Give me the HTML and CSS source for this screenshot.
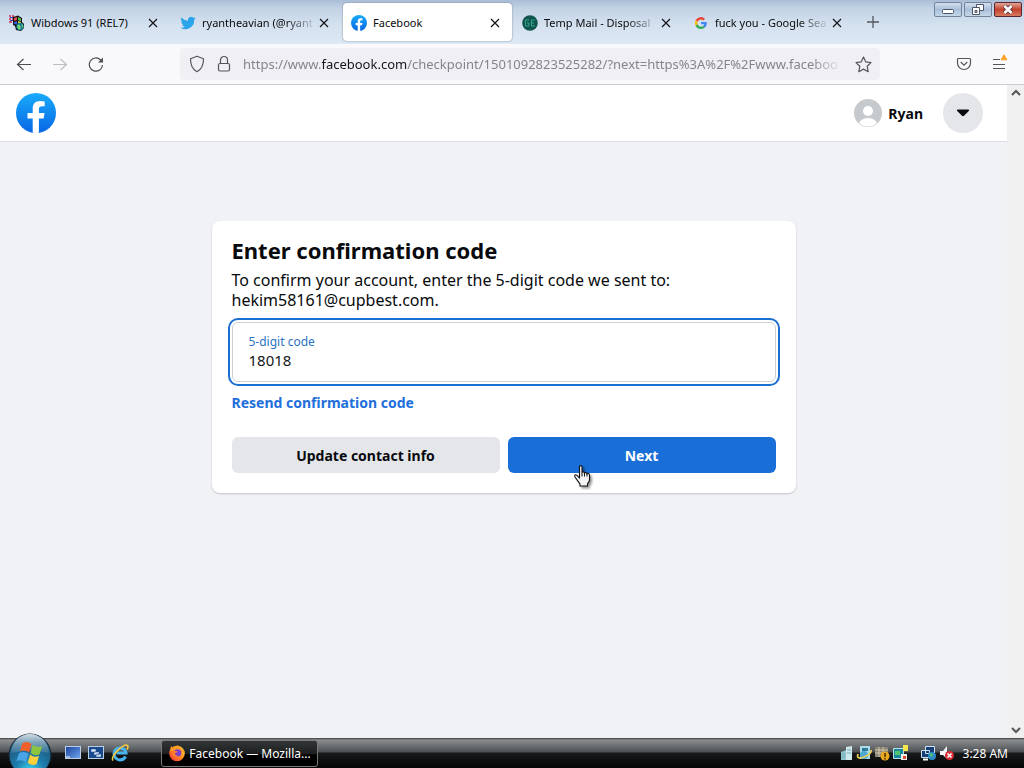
FILE: index.html
```html
<!DOCTYPE html>
<html lang="en">
<head>
<meta charset="utf-8">
<title>Facebook</title>
<link rel="stylesheet" href="styles.css">
</head>
<body>
<svg class="defs" width="0" height="0" aria-hidden="true">
  <defs>
    <linearGradient id="fbBlue" x1="0" y1="0" x2="0" y2="1"><stop offset="0" stop-color="#19abfb"/><stop offset="1" stop-color="#0866e4"/></linearGradient>
    <radialGradient id="orb" cx="50%" cy="90%" r="85%"><stop offset="0" stop-color="#3fdcf5"/><stop offset=".4" stop-color="#1f7fae"/><stop offset="1" stop-color="#1a4a6c"/></radialGradient>
    <linearGradient id="gloss" x1="0" y1="0" x2="0" y2="1"><stop offset="0" stop-color="#e6f0f5" stop-opacity=".9"/><stop offset="1" stop-color="#9fc0d2" stop-opacity=".2"/></linearGradient>
    <linearGradient id="fox" x1="1" y1="0" x2="0" y2="1"><stop offset="0" stop-color="#ffe14a"/><stop offset=".5" stop-color="#ff8a1f"/><stop offset="1" stop-color="#f0283c"/></linearGradient>
    <linearGradient id="screen" x1="0" y1="0" x2="1" y2="1"><stop offset="0" stop-color="#1b3fa0"/><stop offset="1" stop-color="#6fa8ec"/></linearGradient>
    <symbol id="x" viewBox="0 0 10 10"><path d="M1 1l8 8M9 1L1 9" stroke="#15141a" stroke-width="1.2" fill="none"/></symbol>
    <symbol id="fb" viewBox="0 0 40 40"><circle cx="20" cy="20" r="20" fill="url(#fbBlue)"/><path d="M16.700 39.800V25.600h-5.200V20h5.200v-4.200c0-5.100 2.800-7.800 7.400-7.800 1.600 0 3.300.2 4.600.5v4.700h-2.500c-2.600 0-3.300 1.200-3.300 3V20h5.700l-1 5.600h-4.700v14.200a20 20 0 0 1-6.200 0z" fill="#fff"/></symbol>
  </defs>
</svg>

<header class="tabs">
  <div class="tab">
    <svg class="fav" viewBox="0 0 16 16"><path d="M0 1h2M3 1h2M0 4h2M3 4h2M0 7h3" stroke="#d22a55" stroke-width="1.500"/><path d="M1 2.500h3M1 5.500h3" stroke="#3b3fae"/><path d="M4 2l5-1.500L13 3v4l2 2v4l-3 3-5-1-1-4-2-1z" fill="#111"/><path d="M5 3l3-1v3L5 6z" fill="#e64848"/><path d="M9 2l3 1.500v3L9 5z" fill="#4fc04f"/><path d="M5 7l3-1v3L5 9.500z" fill="#3858dd"/><path d="M9 6l3 1v2L9 8.500z" fill="#e8d23a"/><circle cx="11" cy="11.500" r="3.700" fill="#168091"/><path d="M9 10l2 1v3l-2-1zM13 9.500l1 3" stroke="#8be37b" fill="#4ab86a"/></svg>
    <span class="tab-title">Wibdows 91 (REL7)</span>
    <button class="close" aria-label="Close tab"><svg><use href="#x"/></svg></button>
  </div>
  <div class="tab">
    <svg class="fav" viewBox="0 0 24 24"><path fill="#2aa4ea" d="M23.600 5c-.8.400-1.700.600-2.700.800 1-.6 1.700-1.500 2-2.600-.9.500-1.900.900-3 1.100a4.700 4.700 0 0 0-8 4.300A13.300 13.300 0 0 1 2.200 3.700a4.700 4.700 0 0 0 1.500 6.200c-.8 0-1.500-.2-2.100-.6 0 2.300 1.600 4.200 3.700 4.700-.7.200-1.400.2-2.100.1.600 1.800 2.300 3.200 4.400 3.200A9.400 9.400 0 0 1 .7 19.200 13.300 13.300 0 0 0 21.200 7.400c1-.7 1.800-1.500 2.400-2.400z"/></svg>
    <span class="tab-title fade">ryantheavian (@ryant</span>
    <button class="close" aria-label="Close tab"><svg><use href="#x"/></svg></button>
  </div>
  <div class="tab active">
    <svg class="fav"><use href="#fb"/></svg>
    <span class="tab-title">Facebook</span>
    <button class="close" aria-label="Close tab"><svg><use href="#x"/></svg></button>
  </div>
  <div class="tab">
    <svg class="fav" viewBox="0 0 16 16"><circle cx="8" cy="8" r="7.800" fill="#11564d"/><path d="M7 5H3.500v6H7V8H5M13 5H9.500v6H13M9.500 8H12" stroke="#35a58c" fill="none"/></svg>
    <span class="tab-title fade">Temp Mail - Disposal</span>
    <button class="close" aria-label="Close tab"><svg><use href="#x"/></svg></button>
  </div>
  <div class="tab">
    <svg class="fav small" viewBox="0 0 48 48"><path fill="#ea4335" d="M24 10c3.500 0 6.700 1.200 9.200 3.600l6.800-6.900A23.900 23.900 0 0 0 2.600 13.200l8 6.200C12.400 13.700 17.700 10 24 10z"/><path fill="#4285f4" d="M47 24.500c0-1.600-.2-3.100-.4-4.500H24v9h12.900a11 11 0 0 1-4.700 7.200l7.700 6c4.500-4.200 7.100-10.400 7.100-17.700z"/><path fill="#fbbc05" d="M10.500 28.600a14.500 14.500 0 0 1 0-9.200l-8-6.200a24 24 0 0 0 0 21.600z"/><path fill="#34a853" d="M24 48c6.500 0 11.900-2.100 15.900-5.800l-7.700-6A14.500 14.500 0 0 1 10.500 28.600l-8 6.200A24 24 0 0 0 24 48z"/></svg>
    <span class="tab-title fade">fuck you - Google Sea</span>
    <button class="close" aria-label="Close tab"><svg><use href="#x"/></svg></button>
  </div>
  <button class="new-tab" aria-label="New tab"><svg width="12" height="12"><path d="M6 0v12M0 6h12" stroke="#55565c" stroke-width="1.300"/></svg></button>
  <div class="win-buttons">
    <button aria-label="Minimize"><svg width="26" height="13"><rect x="7.500" y="6.500" width="11" height="4" rx="1" fill="#fff" stroke="#4b5565"/></svg></button>
    <button aria-label="Restore"><svg width="26" height="13"><path d="M11.500 1.500h7v6h-7z" fill="#fff" stroke="#4b5565"/><path d="M7.500 4.500h7v7h-7z" fill="#fff" stroke="#4b5565"/><path d="M10 7.500h2v2h-2z" fill="#b8c6d6" stroke="#4b5565"/></svg></button>
    <button class="win-close" aria-label="Close"><svg width="26" height="13"><path d="M9.500 3l7 7M16.500 3l-7 7" stroke="#57323a" stroke-width="4.500"/><path d="M9.500 3l7 7M16.500 3l-7 7" stroke="#fff" stroke-width="2.600"/></svg></button>
  </div>
</header>

<nav class="toolbar">
  <div class="nav-buttons">
    <button aria-label="Back"><svg width="16" height="16"><path d="M15 8.500H1.500M7.500 3L1.500 8.500l6 5.500" fill="none" stroke="#4e4d55" stroke-width="1.200"/></svg></button>
    <button aria-label="Forward"><svg width="16" height="16"><path d="M1 8.500h13.500M8.500 3l6 5.500-6 5.500" fill="none" stroke="#bdbdc1" stroke-width="1.200"/></svg></button>
    <button aria-label="Reload"><svg width="16" height="16"><path d="M14.500 9a6.600 6.600 0 1 1-2-5.200l1.500 1.600" fill="none" stroke="#4e4d55" stroke-width="1.200"/><path d="M15 1.500V6.500H10z" fill="#4e4d55"/></svg></button>
  </div>
  <div class="urlbar">
    <svg width="16" height="18" viewBox="0 0 16 18"><path d="M8 1.200l6.500 2.500c0 6-1.500 10.500-6.500 13C3 14.200 1.500 9.700 1.500 3.700z" fill="none" stroke="#56555d" stroke-width="1.200" stroke-linejoin="round"/></svg>
    <svg width="14" height="18" viewBox="0 0 14 18"><rect x="1.500" y="8.500" width="11" height="7.500" rx="1.500" fill="none" stroke="#56555d" stroke-width="1.200"/><path d="M3.500 8.500V5a3.500 3.500 0 0 1 7 0v3.500" fill="none" stroke="#56555d" stroke-width="1.200"/></svg>
    <span class="url">https://www.<b>facebook.com</b>/checkpoint/1501092823525282/?next=https%3A%2F%2Fwww.faceboo</span>
    <button aria-label="Bookmark"><svg width="17" height="17" viewBox="0 0 17 17"><path d="M8.500 1l2.300 4.900 5.200.7-3.800 3.700 1 5.400-4.700-2.600-4.700 2.600 1-5.400L1 6.600l5.200-.7z" fill="none" stroke="#56555d" stroke-width="1.200" stroke-linejoin="round"/></svg></button>
  </div>
  <div class="tools">
    <button aria-label="Save to Pocket"><svg width="16" height="16"><path d="M2.500 2.500h11a1 1 0 0 1 1 1v3.500a6.500 6.500 0 0 1-13 0V3.500a1 1 0 0 1 1-1z" fill="none" stroke="#56555d" stroke-width="1.200"/><path d="M4.700 6L8 9.200 11.300 6" fill="none" stroke="#56555d" stroke-width="1.200"/></svg></button>
    <button aria-label="Menu"><svg width="16" height="20"><path d="M1 5.500h7M1 10.500h12M1 14.500h12" stroke="#56555d" stroke-width="1.200"/><path d="M12 .8l3 5H9z" fill="#fba32b" stroke="#fba32b" stroke-linejoin="round"/></svg></button>
  </div>
</nav>

<div class="viewport">
  <div class="page">
    <header class="site-header">
      <a class="logo" href="#" aria-label="Facebook"><svg width="40" height="40"><use href="#fb"/></svg></a>
      <a class="profile" href="#">
        <svg width="28" height="28" viewBox="0 0 28 28"><clipPath id="av"><circle cx="14" cy="14" r="13.500"/></clipPath><circle cx="14" cy="14" r="14" fill="#c6cacd"/><g clip-path="url(#av)" fill="#fff"><circle cx="14" cy="12" r="5"/><ellipse cx="14" cy="25" rx="9" ry="6"/></g></svg>
        <span>Ryan</span>
      </a>
      <button class="account" aria-label="Account"><svg width="14" height="8"><path d="M1.500.5h11q1 .5.3 1.400L8 6.800q-1 .8-2 0L1.200 1.900Q.5 1 1.500.5z" fill="#080a0d"/></svg></button>
    </header>
    <main class="content">
      <form class="card">
        <h1>Enter confirmation code</h1>
        <p>To confirm your account, enter the 5-digit code we sent to: hekim58161@cupbest.com.</p>
        <div class="field">
          <label for="code">5-digit code</label>
          <input id="code" type="text" value="18018">
        </div>
        <a class="resend" href="#">Resend confirmation code</a>
        <div class="actions">
          <button class="btn" type="button">Update contact info</button>
          <button class="btn primary" type="button">Next
            <svg class="cursor" width="24" height="28" viewBox="0 0 24 28"><path d="M6.500 1.500c0-1 2.500-1 2.500 0v6c.5-1 2.500-.8 2.500.5.500-.8 2.500-.5 2.500.8.800-.7 2.500-.2 2.500 1.200v5.500l-2 3.500v2H7v-2l-5-7c-1-1.800.5-3 2-1.700l2.500 2.500z" fill="#f4f4f4" stroke="#111" stroke-width="1.100"/><path d="M9 7.500v4M11.500 8v3.500M14 9v2.500" stroke="#111"/></svg>
          </button>
        </div>
      </form>
    </main>
  </div>
  <div class="scrollbar" aria-hidden="true">
    <svg width="10" height="8"><path d="M1 6l4-4 4 4" fill="none" stroke="#55585c" stroke-width="2"/></svg>
    <svg width="10" height="8"><path d="M1 2l4 4 4-4" fill="none" stroke="#55585c" stroke-width="2"/></svg>
  </div>
</div>

<footer class="taskbar">
  <button class="start" aria-label="Start"><svg width="44" height="44" viewBox="0 0 44 44"><circle cx="22" cy="22" r="21" fill="url(#orb)" stroke="#172735"/><path d="M3 20a19 19 0 0 1 38 0q-19-5-38 0z" fill="url(#gloss)"/><g transform="rotate(8 22 21)"><path d="M13 11.500q5-3.500 9-.5l-1 8.500q-5-2.500-9.500.5z" fill="#f0602a"/><path d="M23.500 11.500q5 3 9.500 0l-1.500 8.500q-5 3-9 0z" fill="#8cc63f"/><path d="M11 21.500q5-3 9.500-.5l-1.500 8.500q-5-2.500-9.500.5z" fill="#4ba3e8"/><path d="M22.200 21.500q4.500 3 9 0L30 30q-5 3-9 0z" fill="#ffd03b"/></g></svg></button>
  <div class="quick">
    <button aria-label="Show desktop"><svg width="16" height="14"><rect x=".5" y=".5" width="15" height="12" fill="url(#screen)" stroke="#b9cfe6"/><path d="M1 11h4" stroke="#fff"/></svg></button>
    <button aria-label="Switch windows"><svg width="16" height="14"><rect x=".5" y=".5" width="15" height="12" fill="#1b4a8c" stroke="#b9cfe6"/><path d="M3 3h5v3H3zM6 6h5v3H6zM8 8h5v3H8z" fill="#dce9f7" stroke="#1b4a8c" stroke-width=".5"/></svg></button>
    <button aria-label="Internet Explorer"><svg width="18" height="18"><path d="M14.500 12.500A6 6 0 1 1 15 9H5.500" fill="none" stroke="#47b4ee" stroke-width="3"/><path d="M2 16.500C-1 13 13-2 16.500 1.500c.8 1 .4 2.500-.5 4" fill="none" stroke="#f5c93c" stroke-width="1.600"/></svg></button>
  </div>
  <button class="task">
    <svg width="18" height="18"><circle cx="9" cy="9.500" r="7.800" fill="url(#fox)"/><path d="M2 7L3 2l3 3 4-4c1 3 4 3 6 7" fill="#ff9a25"/><circle cx="9.500" cy="9" r="3.800" fill="#7a3fd2"/><path d="M4 7q4-1 6 1l-3 1q0 3 4 3-4 3-7-1z" fill="#ff7a2a"/></svg>
    <span>Facebook — Mozilla...</span>
  </button>
  <div class="tray">
    <svg width="14" height="16"><path d="M1 7l5-2v10H1z" fill="#8fc3cd"/><path d="M6 2l6-1v14H6z" fill="#cfe9ea"/><path d="M7 5h4M7 8h4M2 9h3M2 12h3" stroke="#6da9b6"/></svg>
    <svg width="16" height="16"><path d="M4 1h10v13H4z" fill="#a9dbe8"/><path d="M6 3h6v3H6z" fill="#307898"/><circle cx="8" cy="10" r="4" fill="#4fa6d2"/><path d="M2 9Q0 15 8 12T15 5" fill="none" stroke="#e6cc59" stroke-width="1.800"/></svg>
    <svg width="16" height="16"><path d="M1 2h13v10H1z" fill="#8a8272"/><path d="M1 5h13M1 8h13M5 2v10M9 2v10" stroke="#cec6ad"/><circle cx="11" cy="11" r="4.500" fill="#eba91d"/><path d="M11 8v4M11 13v1.500" stroke="#4b2b00" stroke-width="1.500"/></svg>
    <svg width="17" height="16"><path d="M1.500 3.500h10v10h-10z" fill="#19879d" stroke="#b5e4e4"/><path d="M11 0h5v6h-5z" fill="#f5e64c"/><path d="M3 6h5v4H3z" fill="#52c66a"/><path d="M9 9h6v6H9z" fill="#eef2ee"/><path d="M11 11h3v3h-3z" fill="#de4931"/></svg>
    <svg class="network" width="17" height="16"><path d="M5.500 1.500h9v7h-9zM1.500 5.500h8v7h-8z" fill="#173e77" stroke="#cde5f2"/><path d="M3 14.500h5" stroke="#fff" stroke-width="2"/><circle cx="12" cy="11" r="4" fill="#2b8cc9"/><path d="M10 8l3 1-1 3-2-1z" fill="#55c567"/></svg>
    <svg width="17" height="16"><path d="M1 6h3l4-5v13l-4-4H1z" fill="#f2f4f5"/><circle cx="10.500" cy="10.500" r="4.500" fill="#d92c35"/><path d="M8.500 8.500l4 4m0-4l-4 4" stroke="#fff" stroke-width="1.600"/></svg>
    <time>3:28 AM</time>
  </div>
</footer>
</body>
</html>
```
FILE: styles.css
```css
* { box-sizing: border-box; }
body {
  margin: 0;
  height: 100vh;
  display: flex;
  flex-direction: column;
  overflow: hidden;
  font-family: "Noto Sans", "Open Sans", sans-serif;
  color: #080a0d;
}
button {
  border: 0;
  padding: 0;
  background: none;
  font: inherit;
  color: inherit;
  display: flex;
  align-items: center;
  justify-content: center;
  flex: none;
}
a { text-decoration: none; color: inherit; }
svg { display: block; flex: none; }
.defs { position: absolute; }

.tabs {
  display: flex;
  flex: none;
  height: 44px;
  background: linear-gradient(#a9bdd5, #c3d3e6 20%, #d3e0ee 55%, #dde9f4);
}
.tab {
  flex: 0 1 171px;
  min-width: 0;
  display: flex;
  align-items: center;
  gap: 6px;
  padding: 1px 13px 0 9px;
  font-size: 11px;
  line-height: 16px;
}
.tab.active {
  flex-basis: 169px;
  margin: 3px 1px;
  padding: 1px 12px 0 8px;
  background: #fff;
  border-radius: 4px;
  box-shadow: 0 0 2px #6f7f96;
}
.fav { width: 16px; height: 16px; }
.fav.small { padding: 2px; }
.tab-title {
  flex: 1;
  min-width: 0;
  white-space: nowrap;
}
.fade {
  mask-image: linear-gradient(to left, transparent, #000 32px);
}
.close svg { width: 10px; height: 10px; }
.tab .close { margin-left: -4px; }
.new-tab { width: 36px; }
.win-buttons {
  display: flex;
  gap: 2px;
  margin: 2px 2px 0 auto;
}
.win-buttons button {
  width: 28px;
  height: 15px;
  border: 1px solid #71839b;
  border-radius: 2px;
  background: linear-gradient(#d3dfed, #a9bfd9 50%, #c5d7e8);
}
.win-buttons .win-close {
  border-color: #5b2430;
  background: linear-gradient(#e3a79b, #c4412c 50%, #d47b60);
}

.toolbar {
  flex: none;
  display: flex;
  align-items: center;
  height: 41px;
  padding: 0 16px;
  background: #f9f9fb;
  border-bottom: 1px solid #cccccf;
}
.nav-buttons { display: flex; gap: 20px; }
.urlbar {
  flex: 1;
  min-width: 0;
  display: flex;
  align-items: center;
  gap: 12px;
  height: 32px;
  margin: 0 76px;
  padding: 0 8px 0 9px;
  background: #f0f0f4;
  border-radius: 4px;
}
.url {
  flex: 1;
  min-width: 0;
  overflow: hidden;
  white-space: nowrap;
  font-size: 13px;
  color: #85848c;
  mask-image: linear-gradient(to left, transparent, #000 32px);
}
.url b { font-weight: 400; color: #15141a; }
.tools { display: flex; align-items: center; gap: 20px; }

.viewport { flex: 1; min-height: 0; display: flex; }
.page {
  flex: 1;
  min-width: 0;
  background: #f0f2f5;
}
.site-header {
  display: flex;
  align-items: center;
  height: 57px;
  padding: 0 24px 0 16px;
  background: #fff;
  border-bottom: 1px solid #dcdee2;
}
.profile {
  display: flex;
  align-items: center;
  gap: 6px;
  margin: 0 20px 0 auto;
  font-size: 14px;
  font-weight: 700;
}
.account {
  width: 40px;
  height: 40px;
  border-radius: 50%;
  background: #e4e6ea;
}
.content { padding: 79px 16px 0; }
.card {
  max-width: 584px;
  margin: 0 auto;
  padding: 16px 20px 20px;
  background: #fff;
  border-radius: 8px;
  box-shadow: 0 1px 2px rgba(0, 0, 0, .2);
}
h1 {
  margin: 0 0 7px;
  font-size: 22px;
  line-height: 26px;
  font-weight: 700;
}
p { margin: 0 0 12px; font-size: 16px; line-height: 20px; max-width: 480px; }
.field {
  height: 60px;
  padding: 11px 16px;
  border: 1px solid #ccd0d5;
  border-radius: 6px;
  outline: 2px solid #1b6fd0;
  outline-offset: 2px;
}
.field label {
  display: block;
  font-size: 12px;
  line-height: 16px;
  color: #2a72c4;
}
.field input {
  display: block;
  width: 100%;
  height: 20px;
  padding: 0;
  border: 0;
  outline: 0;
  background: none;
  font: 15px/20px "Noto Sans", "Open Sans", sans-serif;
  color: #15171a;
}
.resend {
  display: block;
  margin: 11px 0 24px;
  font-size: 14px;
  line-height: 20px;
  font-weight: 700;
  color: #216fdb;
}
.actions { display: flex; gap: 8px; }
.btn {
  flex: 1;
  height: 36px;
  border-radius: 6px;
  background: #e4e6ea;
  font-size: 14px;
  font-weight: 700;
}
.primary { position: relative; background: #1a6ed8; color: #fff; }
.cursor {
  position: absolute;
  left: 65px;
  top: 28px;
  filter: drop-shadow(2px 2px 1px rgba(0, 0, 0, .4));
}
.scrollbar {
  width: 17px;
  display: flex;
  flex-direction: column;
  align-items: center;
  justify-content: space-between;
  padding: 4px 0;
  background: #f0f0f0;
}

.taskbar {
  position: relative;
  flex: none;
  display: flex;
  align-items: center;
  height: 30px;
  padding: 0 16px 0 65px;
  color: #fff;
  font-size: 12px;
  background: linear-gradient(#3a3c3e, #8b8e90 2px, #4d5052 14px, #17191a 15px, #050606);
}
.start { position: absolute; left: 8px; top: -5px; }
.quick { display: flex; align-items: center; gap: 7px; }
.task {
  gap: 3px;
  width: 157px;
  height: 27px;
  margin-left: 32px;
  border: 1px solid #77797b;
  border-radius: 3px;
  background: linear-gradient(#333638, #1d1f20 50%, #000 55%);
  white-space: nowrap;
}
.tray { display: flex; align-items: center; gap: 2px; margin-left: auto; }
.network { margin-left: 9px; }
.tray time { margin-left: 5px; }
```
